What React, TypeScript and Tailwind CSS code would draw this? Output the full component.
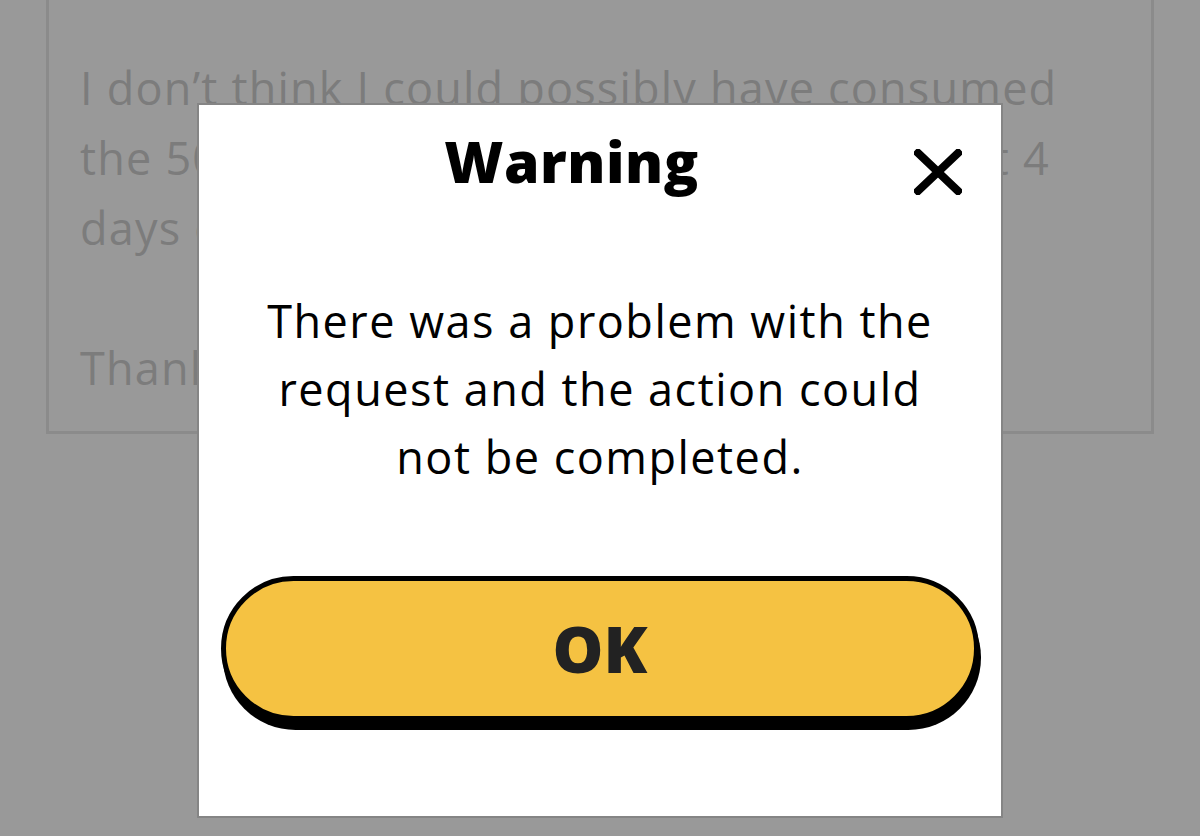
import React from "react";

export default function App() {
  const font = { fontFamily: '"Open Sans", "DejaVu Sans", sans-serif' };
  return (
    <div className="relative w-[1200px] h-[836px] overflow-hidden bg-[#999999]" style={font}>
      {/* background page card */}
      <div className="mx-[46px] border-[3px] border-t-0 border-[#8b8b8b] pl-[31px] pr-[20px] pt-[53px] pb-[28px] text-[45px] leading-[70px] tracking-[1.2px] text-[#7c7c7c]">
        <p className="whitespace-nowrap">I don’t think I could possibly have consumed</p>
        <p className="whitespace-nowrap">
          the 50GB <span className="tracking-[1.5px]">of data they say I had in the</span> last 4
        </p>
        <p className="whitespace-nowrap">days of my current billing period.</p>
        <p className="h-[70px]"></p>
        <p className="whitespace-nowrap">Thanks for your help.</p>
      </div>

      {/* modal */}
      <div className="absolute left-[197px] top-[103px] w-[806px] h-[715px] border-2 border-[#858585] bg-white flex flex-col">
        <div className="flex items-start pl-[30px] pr-[39px] pt-[28px]">
          <h2 className="flex-1 text-center text-[57px] leading-[56px] font-extrabold tracking-[0.5px] text-black">Warning</h2>
          <button className="mt-[16px] w-[48px] h-[46px] flex items-center justify-center" aria-label="Close">
            <svg width="48" height="46" viewBox="0 0 48 46">
              <path d="M4 4 L44 42 M44 4 L4 42" stroke="#000" strokeWidth="8" strokeLinecap="square" />
            </svg>
          </button>
        </div>
        <p className="mt-[92px] text-center text-[45px] leading-[68px] tracking-[1.5px] text-black">
          There was a problem with the
          <br />
          request and the action could
          <br />
          not be completed.
        </p>
        <div className="px-[22px] mt-[85px]">
          <button className="w-[758px] h-[145px] rounded-full border-[5px] border-black bg-[#f5c242] shadow-[2px_9px_0_0_#000] flex items-center justify-center">
            <span className="text-[64px] font-extrabold text-[#222222] leading-none">OK</span>
          </button>
        </div>
      </div>
    </div>
  );
}
